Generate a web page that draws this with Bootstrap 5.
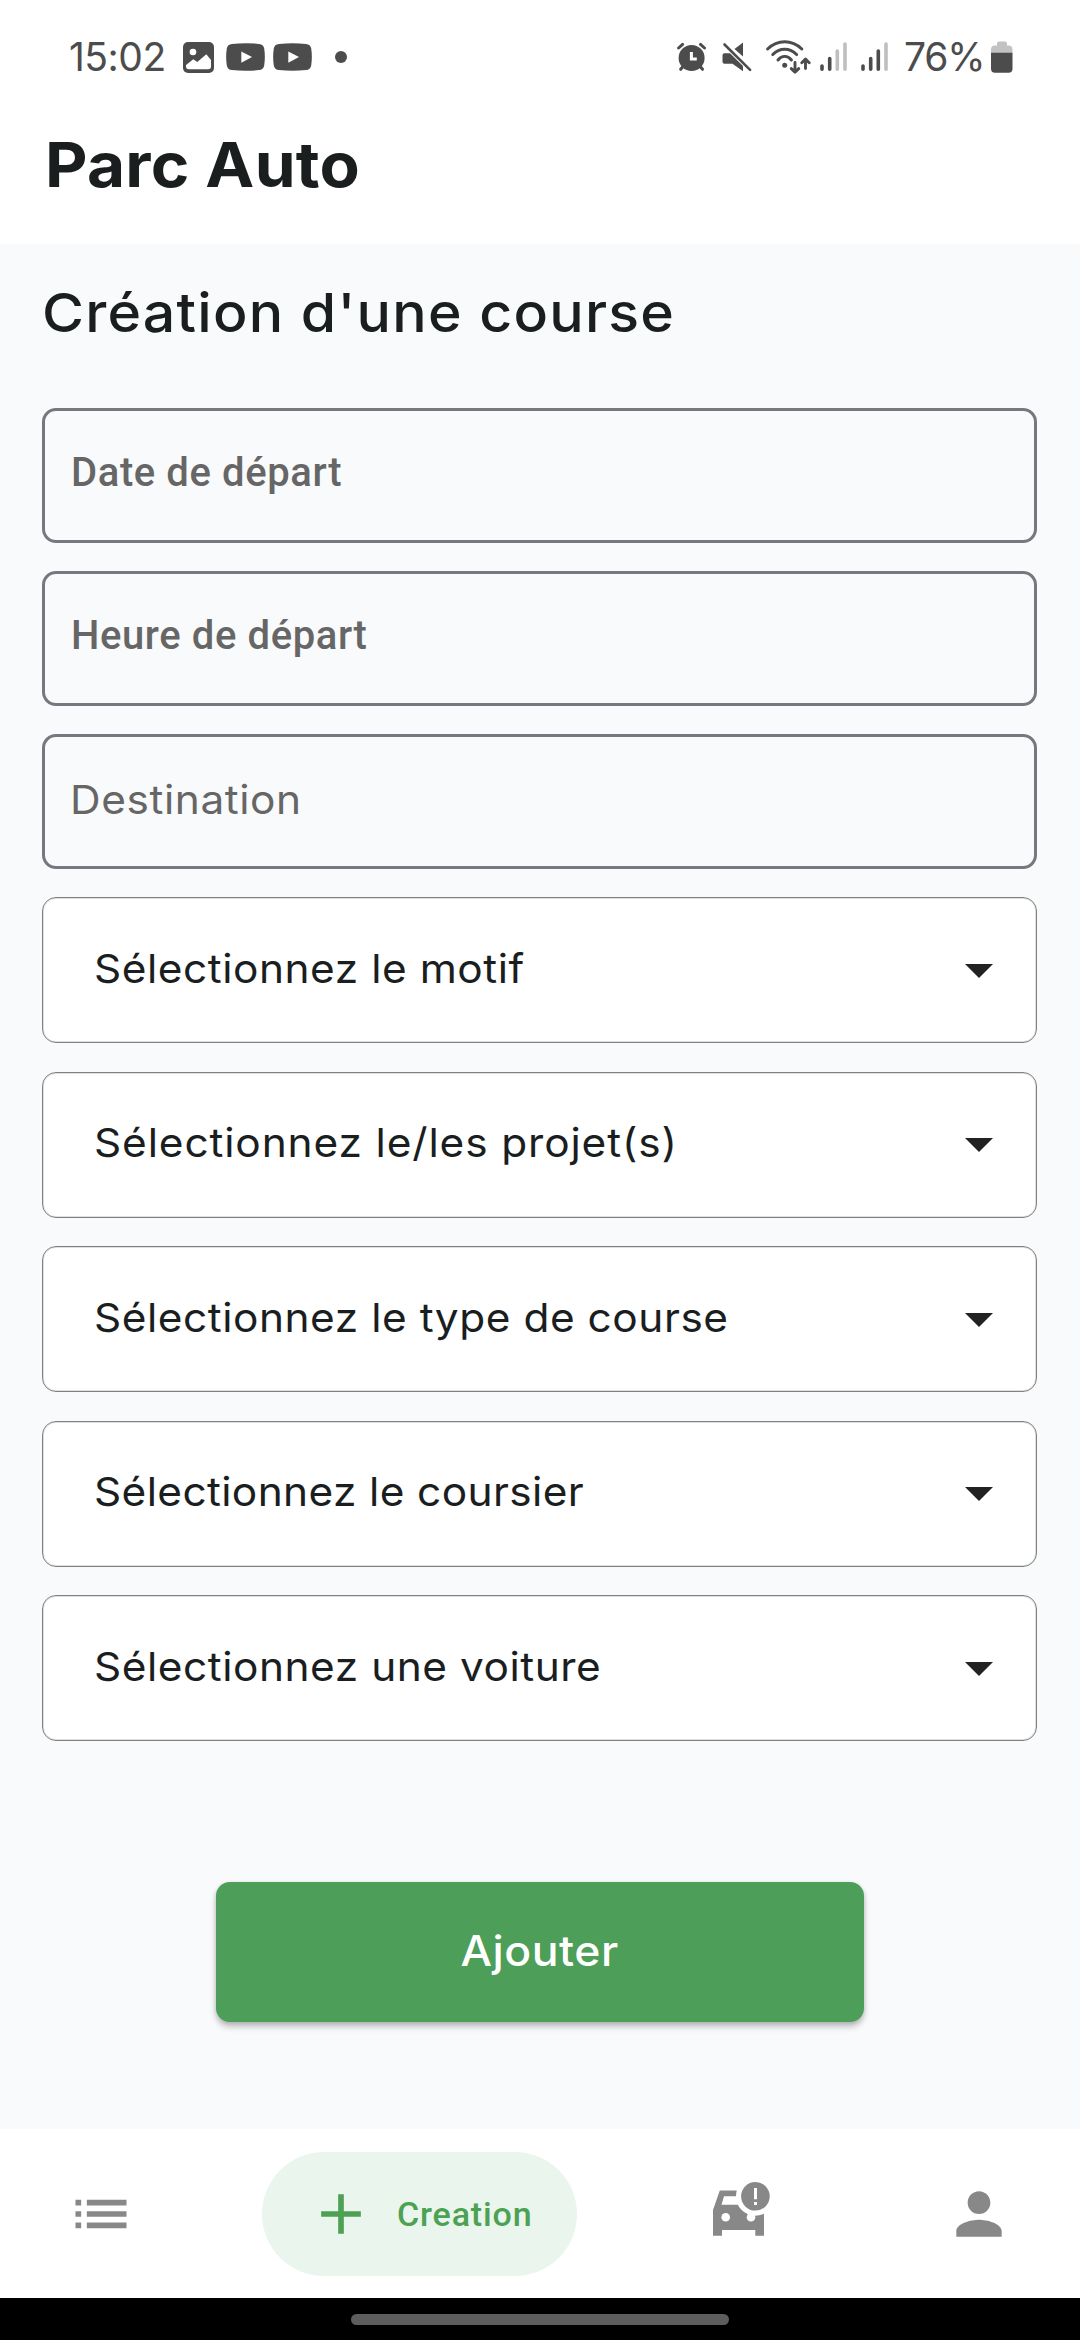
<!DOCTYPE html>
<html lang="fr">
<head>
<meta charset="utf-8">
<meta name="viewport" content="width=device-width, initial-scale=1">
<title>Parc Auto</title>
<link href="https://cdn.jsdelivr.net/npm/bootstrap@5.3.0/dist/css/bootstrap.min.css" rel="stylesheet">
<style>
body { font-family: Inter, "Open Sans", sans-serif; color: #1a1e1f; background: #f9fafc; width: 1080px; height: 2340px; overflow: hidden; }
svg { display: block; flex: none; }

.wide { display: inline-block; white-space: nowrap; transform: scaleX(1.06); transform-origin: left center; }

/* system status bar */
.statusbar { height: 114px; padding: 0 67px 0 69px; color: #4c4c4c; }
.clock, .charge { font-size: 39px; line-height: 40px; white-space: nowrap; }
.clock { width: 114px; letter-spacing: -.5px; }
.charge { width: 80px; margin: 0 7px 0 15px; letter-spacing: -1.2px; }
.more-dot { width: 12px; height: 12px; margin-left: 23px; background: #4c4c4c; }

/* page header */
.topbar { height: 130px; padding: 0 45px 29px; }
.app-name { font-size: 62px; font-weight: 700; line-height: 70px; letter-spacing: .2px; }

/* form */
.screen { padding: 36px 43px 0 42px; }
.screen-title { font-size: 54px; font-weight: 500; line-height: 66px; letter-spacing: 1.15px; margin-bottom: 62px; }
.entries { gap: 28px; margin-bottom: 28px; }
.entry { height: 135px; border: 3px solid #78767f; border-radius: 14px; color: #666; padding: 0 26px 6px; font: 500 40px/48px Roboto, sans-serif; letter-spacing: .6px; }
.entry-plain { font: 400 40px/48px Inter, sans-serif; letter-spacing: .55px; padding: 0 25px 4px; }
.pickers { gap: 28.5px; }
.picker { height: 146px; border: 1px solid #808080; border-radius: 14px; background: #fff; box-shadow: inset 0 0 0 1px rgba(0,0,0,.12); color: #1a1e1f; padding: 0 43px 3px 51px; font-size: 40px; line-height: 48px; letter-spacing: .5px; }
.picker:nth-child(2) { letter-spacing: .82px; }
.picker:nth-child(4) { letter-spacing: .35px; }
.picker svg { margin-top: 3px; }
.submit { width: 648px; height: 140px; margin-top: 141px; padding: 0 0 3px; border: 0; border-radius: 14px; background: #4d9e58; font-size: 42px; font-weight: 500; letter-spacing: .5px; box-shadow: 0 5px 6px rgba(0,0,0,.22), 0 1px 4px rgba(0,0,0,.13); }
.submit .wide { transform-origin: center; }

/* bottom navigation */
.tabbar { height: 169px; padding-left: 67px; color: #888; }
.pill { width: 315px; height: 124px; margin: 0 136px 0 127px; padding-left: 45px; gap: 22px; background: #e9f5ed; color: #4da153; font: 500 34px/40px Roboto, sans-serif; letter-spacing: .85px; }
.tab-person { margin-left: 175px; }
.gesture { height: 42px; background: #000; padding-top: 16px; }
.gesture-handle { width: 378px; height: 11px; background: #5d5d5d; }
</style>
</head>
<body class="d-flex flex-column">
<div class="statusbar bg-white d-flex align-items-center">
  <span class="clock">15:02</span>
  <svg width="31" height="31" viewBox="0 0 31 31"><rect width="31" height="31" rx="5" fill="currentColor"/><circle cx="10" cy="10" r="3.3" fill="#fff"/><path fill="#fff" d="M3 23l7.3-5.7 4 2.6 9-7.6L28 18v6.5a2.8 2.8 0 0 1-2.8 2.8H5.8A2.8 2.8 0 0 1 3 24.500z"/></svg>
  <svg width="39" height="28" viewBox="0 0 39 28" style="margin-left:12px"><path fill="currentColor" d="M6 .9Q19.500-.6 33 .9 37.500 1.300 38.200 5.500 39.500 14 38.200 22.500 37.500 26.700 33 27.100 19.500 28.600 6 27.100 1.500 26.700.8 22.500-.5 14 .8 5.500 1.500 1.300 6 .9z"/><path fill="#fff" d="M15.300 8.500v11.200L26 14.100z"/></svg>
  <svg width="39" height="28" viewBox="0 0 39 28" style="margin-left:8px"><path fill="currentColor" d="M6 .9Q19.500-.6 33 .9 37.500 1.300 38.200 5.500 39.500 14 38.200 22.500 37.500 26.700 33 27.100 19.500 28.600 6 27.100 1.500 26.700.8 22.500-.5 14 .8 5.500 1.500 1.300 6 .9z"/><path fill="#fff" d="M15.300 8.500v11.200L26 14.100z"/></svg>
  <span class="more-dot rounded-circle"></span>

  <svg class="ms-auto" width="29" height="34" viewBox="0 0 29 34" fill="none" stroke="currentColor" stroke-width="3" stroke-linecap="round"><circle cx="14.600" cy="18" r="13" fill="currentColor" stroke="none"/><path d="M1.600 8l4-3.600M23.500 4.400l4 3.600M6 26.500l-2.300 2.800M23.200 26.500l2.300 2.800"/><path d="M14.400 12v7h5.400" stroke="#fff" stroke-linecap="butt"/></svg>
  <svg width="31" height="34" viewBox="0 0 31 34" style="margin-left:15px"><path fill="currentColor" d="M3.500 13.300H9L22 26v5.300L11.500 23.700H3.500a2 2 0 0 1-2-2v-6.400a2 2 0 0 1 2-2zM13.500 9L22 2.500V16.500z"/><path d="M3.500 4.500l25.600 25.300" stroke="currentColor" stroke-width="2.600" stroke-linecap="round"/></svg>
  <svg width="45" height="34" viewBox="0 0 45 34" style="margin-left:14px" fill="none" stroke="currentColor" stroke-width="2.900" stroke-linecap="round" stroke-linejoin="round"><path d="M1.600 9Q9 1.700 18.700 1.700T35.800 9M6.800 14.600Q11.800 9.200 18.700 9.200T30.600 14.600M12 20Q14.800 16.400 18.700 16.400T25.400 20M29 22.500v9.500M25.300 28.600l3.700 3.600 3.700-3.600M39.500 28.500v-9M35.800 22.700l3.700-3.600 3.700 3.600"/><circle cx="18.700" cy="25.300" r="2.500" fill="currentColor" stroke="none"/></svg>
  <svg width="28" height="34" viewBox="0 0 28 34" style="margin-left:9px" stroke="currentColor" stroke-width="3.600" stroke-linecap="round"><path d="M2 26v3.300M9.700 18.500v10.800"/><path stroke="#bfbfbf" d="M17.300 11v18.300M25 4v25.300"/></svg>
  <svg width="28" height="34" viewBox="0 0 28 34" style="margin-left:13px" stroke="currentColor" stroke-width="3.600" stroke-linecap="round"><path d="M2 26v3.300M9.700 18.500v10.800M17.300 11v18.300"/><path stroke="#bfbfbf" d="M25 4v25.300"/></svg>
  <span class="charge">76%</span>
  <svg width="22" height="34" viewBox="0 0 22 34"><path fill="#c2c2c2" d="M0 13V9.500a4 4 0 0 1 4-4h2V3.500a2 2 0 0 1 2-2h6a2 2 0 0 1 2 2v2h1.500a4 4 0 0 1 4 4V13z"/><path fill="currentColor" d="M0 12.700h21.500v16a4 4 0 0 1-4 4H4a4 4 0 0 1-4-4z"/></svg>
</div>

<header class="topbar bg-white d-flex align-items-center">
  <h1 class="app-name mb-0"><span class="wide">Parc Auto</span></h1>
</header>

<main class="screen flex-grow-1">
  <h2 class="screen-title"><span class="wide">Création d'une course</span></h2>
  <div class="entries d-flex flex-column">
    <div class="entry d-flex align-items-center">Date de départ</div>
    <div class="entry d-flex align-items-center">Heure de départ</div>
    <div class="entry entry-plain d-flex align-items-center"><span class="wide">Destination</span></div>
  </div>
  <div class="pickers d-flex flex-column">
    <div class="picker d-flex align-items-center justify-content-between" role="button"><span class="wide">Sélectionnez le motif</span><svg width="28" height="15" viewBox="0 0 28 15"><path d="M0 1h28L14 15z" fill="#222"/></svg></div>
    <div class="picker d-flex align-items-center justify-content-between" role="button"><span class="wide">Sélectionnez le/les projet(s)</span><svg width="28" height="15" viewBox="0 0 28 15"><path d="M0 1h28L14 15z" fill="#222"/></svg></div>
    <div class="picker d-flex align-items-center justify-content-between" role="button"><span class="wide">Sélectionnez le type de course</span><svg width="28" height="15" viewBox="0 0 28 15"><path d="M0 1h28L14 15z" fill="#222"/></svg></div>
    <div class="picker d-flex align-items-center justify-content-between" role="button"><span class="wide">Sélectionnez le coursier</span><svg width="28" height="15" viewBox="0 0 28 15"><path d="M0 1h28L14 15z" fill="#222"/></svg></div>
    <div class="picker d-flex align-items-center justify-content-between" role="button"><span class="wide">Sélectionnez une voiture</span><svg width="28" height="15" viewBox="0 0 28 15"><path d="M0 1h28L14 15z" fill="#222"/></svg></div>
  </div>
  <button type="button" class="btn btn-success submit d-block mx-auto"><span class="wide">Ajouter</span></button>
</main>

<nav class="tabbar bg-white d-flex align-items-center">
  <svg width="68" height="68" viewBox="0 0 24 24" fill="currentColor"><path d="M3 13h2v-2H3v2zm0 4h2v-2H3v2zm0-8h2V7H3v2zm4 4h14v-2H7v2zm0 4h14v-2H7v2zM7 7v2h14V7H7z"/></svg>
  <div class="pill rounded-pill d-flex align-items-center">
    <svg width="68" height="68" viewBox="0 0 24 24" fill="currentColor"><path d="M19 13h-6v6h-2v-6H5v-2h6V5h2v6h6v2z"/></svg>
    <span>Creation</span>
  </div>
  <svg width="57" height="63" viewBox="0 0 57 63" fill="currentColor"><path d="M6.800 8.500H24V14.200H11L8.500 22.700H51V53.700H42.300V48H9v5.700H0V28z"/><circle cx="12.700" cy="35.300" r="4.300" fill="#fff"/><circle cx="38" cy="35.300" r="4.300" fill="#fff"/><circle cx="42.400" cy="14.300" r="19.500" fill="#fff"/><circle cx="42.400" cy="14.300" r="14.300"/><path fill="#fff" d="M41 6h3v11.300h-3zM41 20h3v3h-3z"/></svg>
  <svg class="tab-person" width="68" height="68" viewBox="0 0 24 24" fill="currentColor"><path d="M12 12c2.210 0 4-1.790 4-4s-1.790-4-4-4-4 1.790-4 4 1.790 4 4 4zm0 2c-2.670 0-8 1.340-8 4v2h16v-2c0-2.660-5.330-4-8-4z"/></svg>
</nav>
<div class="gesture"><div class="gesture-handle rounded-pill mx-auto"></div></div>
<script src="https://cdn.jsdelivr.net/npm/bootstrap@5.3.0/dist/js/bootstrap.bundle.min.js"></script>
</body>
</html>
